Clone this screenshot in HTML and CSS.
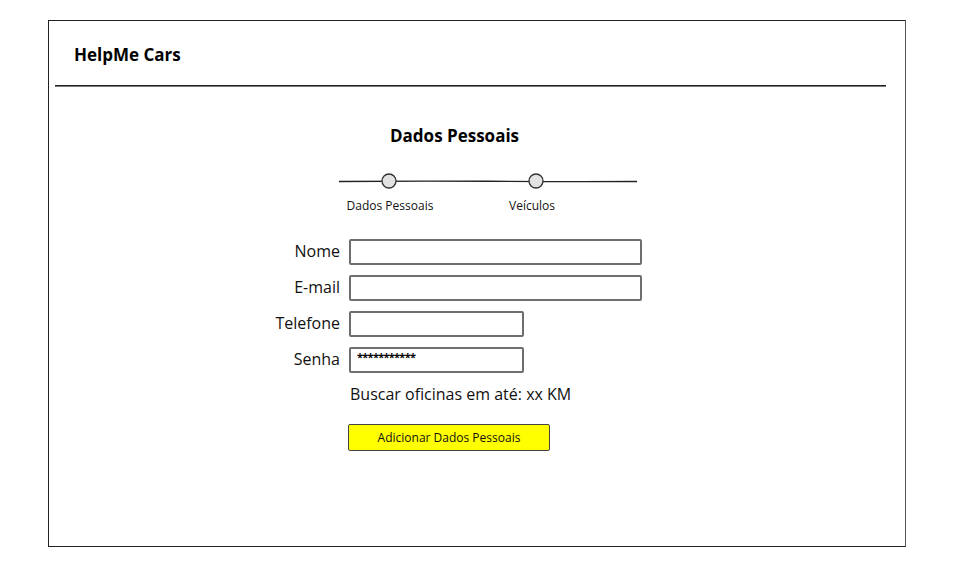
FILE: index.html
```html
<!DOCTYPE html>
<html lang="pt">
<head>
<meta charset="utf-8">
<title>HelpMe Cars</title>
<link rel="stylesheet" href="styles.css">
</head>
<body>
<div class="frame">
  <header class="header">
    <span class="brand">HelpMe Cars</span>
  </header>
  <div class="rule"></div>
  <main class="content">
    <h1 class="title">Dados Pessoais</h1>
    <div class="stepper">
      <svg class="track" width="298" height="16" viewBox="0 0 298 16">
        <path d="M0 8.5 Q75 7.8 150 8.3 T298 8.5" fill="none" stroke="#222" stroke-width="1.4"/>
        <circle cx="50" cy="8" r="7" fill="#e2e2e2" stroke="#333" stroke-width="1.3"/>
        <circle cx="197" cy="8" r="7" fill="#e2e2e2" stroke="#333" stroke-width="1.3"/>
      </svg>
      <div class="steps">
        <span class="step step-one">Dados Pessoais</span>
        <span class="step step-two">Veículos</span>
      </div>
    </div>
    <form class="form">
      <label class="label">Nome</label>
      <div class="field wide"></div>
      <label class="label">E-mail</label>
      <div class="field wide"></div>
      <label class="label">Telefone</label>
      <div class="field short"></div>
      <label class="label">Senha</label>
      <div class="field short pwd">***********</div>
    </form>
    <p class="distance">Buscar oficinas em até: xx KM</p>
    <button class="submit" type="button">Adicionar Dados Pessoais</button>
  </main>
</div>
</body>
</html>
```
FILE: styles.css
```css
* { box-sizing: border-box; }
html, body { margin: 0; padding: 0; background: #fff; }
body {
  font-family: "Open Sans", "Noto Sans", sans-serif;
  color: #111;
}
.frame {
  margin: 20px 0 0 48px;
  width: 858px;
  height: 527px;
  border: 1px solid #222;
  border-right-color: #555;
  display: flex;
  flex-direction: column;
}
.header {
  height: 64px;
  display: flex;
  align-items: center;
  padding: 2px 0 0 25px;
}
.brand {
  font-weight: 700;
  font-size: 17px;
  color: #000;
}
.rule {
  height: 2px;
  margin: 0 19px 0 6px;
  background: #777;
  border-top: 1px solid #222;
}
.content {
  display: flex;
  flex-direction: column;
  align-items: flex-start;
}
.title {
  margin: 37px 0 0 341px;
  font-size: 17px;
  font-weight: 700;
  line-height: 24px;
  color: #000;
}
.stepper {
  margin: 25px 0 0 290px;
  width: 298px;
}
.track { display: block; }
.steps {
  margin-top: 9px;
  display: flex;
  height: 16px;
  font-size: 12px;
  line-height: 16px;
}
.step { text-align: center; display: block; }
.step-one { width: 100px; margin-left: 1px; }
.step-two { width: 80px; margin-left: 52px; }
.form {
  margin: 25px 0 0 0;
  display: grid;
  grid-template-columns: 291px auto;
  column-gap: 9px;
  row-gap: 10px;
  align-items: center;
}
.label {
  text-align: right;
  font-size: 16px;
  line-height: 26px;
  margin-top: -2px;
}
.field {
  height: 26px;
  border: 2px solid #6e6e6e;
  border-radius: 2px;
  background: #fff;
}
.wide { width: 293px; }
.short { width: 175px; }
.pwd {
  font-size: 11px;
  font-weight: 700;
  line-height: 16px;
  padding-left: 6px;
  letter-spacing: -0.7px;
  color: #000;
}
.distance {
  margin: 11px 0 0 301px;
  font-size: 16px;
  line-height: 20px;
}
.submit {
  margin: 20px 0 0 299px;
  width: 202px;
  height: 27px;
  background: #ffff00;
  border: 1px solid #444;
  border-radius: 2px;
  font-family: inherit;
  font-size: 12px;
  color: #111;
  padding: 0;
}
```
